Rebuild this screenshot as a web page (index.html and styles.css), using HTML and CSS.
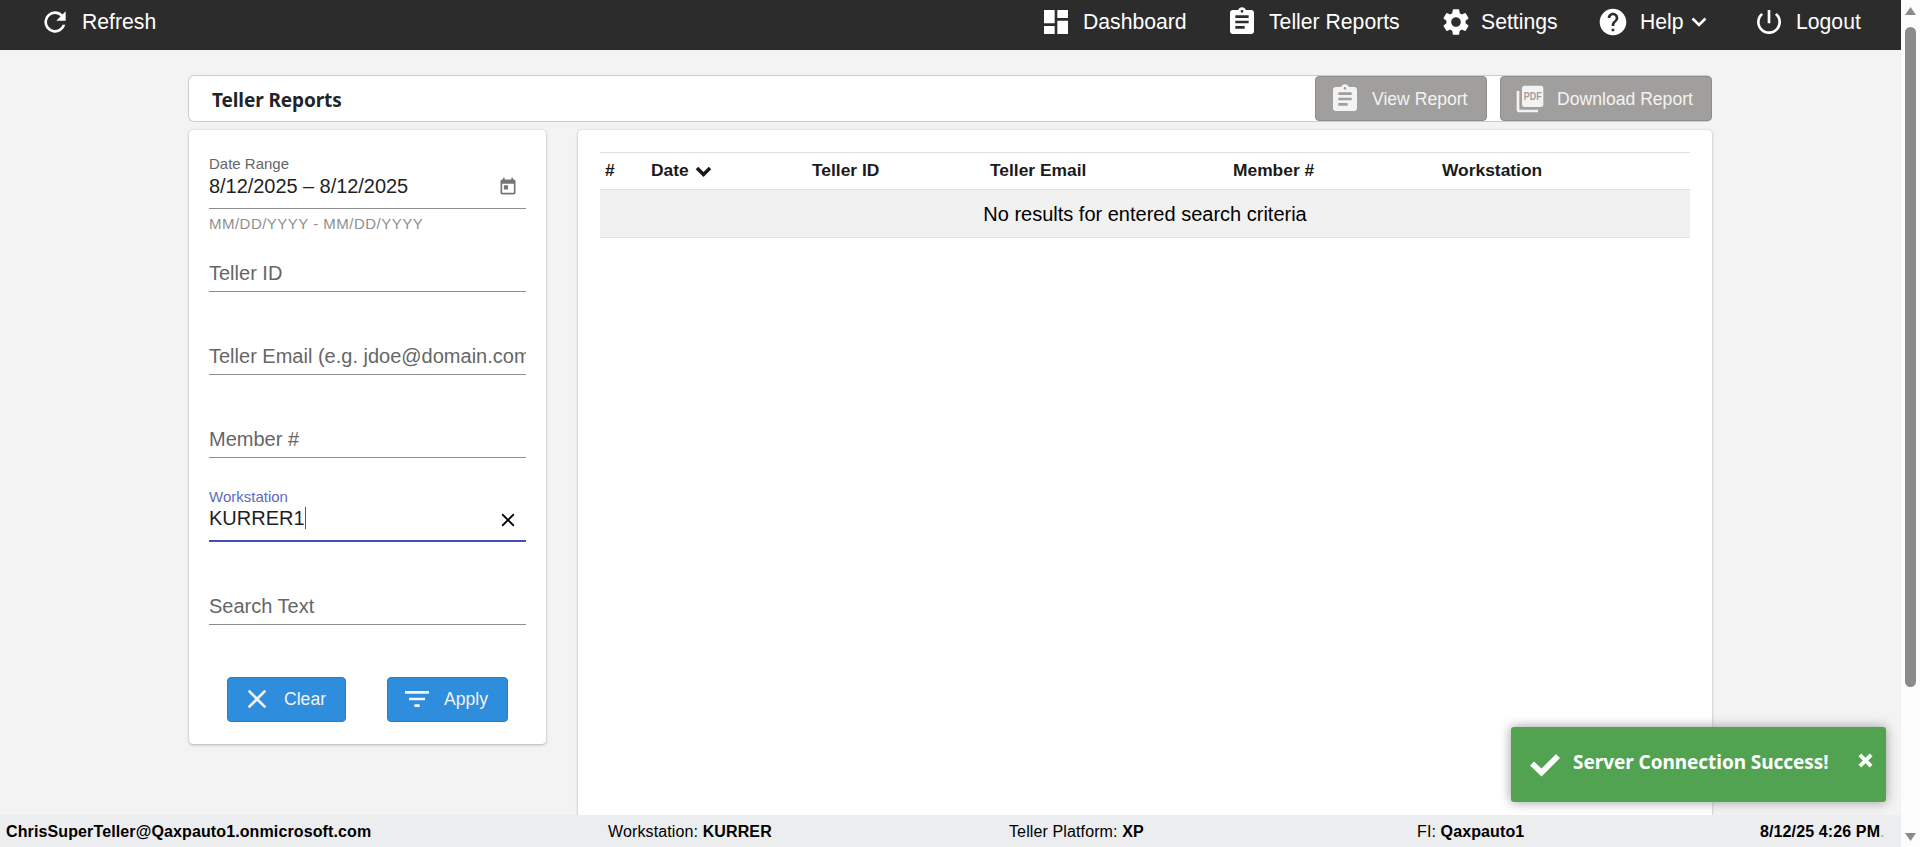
FILE: index.html
```
<!DOCTYPE html>
<html lang="en">
<head>
    <meta charset="utf-8">
    <title>Teller Reports</title>
    <link rel="stylesheet" href="styles.css">
</head>
<body>
    <svg width="0" height="0" class="defs">
        <symbol id="i-refresh" viewBox="0 0 24 24"><path d="M17.65 6.35A7.96 7.96 0 0 0 12 4a8 8 0 1 0 7.73 10h-2.08A6 6 0 1 1 12 6c1.66 0 3.14.69 4.22 1.78L13 11h7V4z"/></symbol>
        <symbol id="i-dashboard" viewBox="0 0 24 24"><path d="M3 13h8V3H3zm0 8h8v-6H3zm10 0h8V11h-8zm0-18v6h8V3z"/></symbol>
        <symbol id="i-report" viewBox="0 0 24 24"><path d="M19 3h-4.18C14.4 1.84 13.3 1 12 1s-2.4.84-2.82 2H5c-1.1 0-2 .9-2 2v14c0 1.1.9 2 2 2h14c1.1 0 2-.9 2-2V5c0-1.1-.9-2-2-2zm-7 0c.55 0 1 .45 1 1s-.45 1-1 1-1-.45-1-1 .45-1 1-1zm2 14H7v-2h7zm3-4H7v-2h10zm0-4H7V7h10z"/></symbol>
        <symbol id="i-settings" viewBox="0 0 24 24"><path d="M19.14 12.94c.04-.3.06-.61.06-.94 0-.32-.02-.64-.07-.94l2.03-1.58c.18-.14.23-.41.12-.61l-1.92-3.32c-.12-.22-.37-.29-.59-.22l-2.39.96c-.5-.38-1.03-.7-1.62-.94l-.36-2.54c-.04-.24-.24-.41-.48-.41h-3.84c-.24 0-.43.17-.47.41l-.36 2.54c-.59.24-1.13.57-1.62.94l-2.39-.96c-.22-.08-.47 0-.59.22L2.74 8.87c-.12.21-.08.47.12.61l2.03 1.58c-.05.3-.09.63-.09.94s.02.64.07.94l-2.03 1.58c-.18.14-.23.41-.12.61l1.92 3.32c.12.22.37.29.59.22l2.39-.96c.5.38 1.03.7 1.62.94l.36 2.54c.05.24.24.41.48.41h3.84c.24 0 .44-.17.47-.41l.36-2.54c.59-.24 1.13-.56 1.62-.94l2.39.96c.22.08.47 0 .59-.22l1.92-3.32c.12-.22.07-.47-.12-.61zM12 15.6c-1.98 0-3.6-1.62-3.6-3.6s1.62-3.6 3.6-3.6 3.6 1.62 3.6 3.6-1.62 3.6-3.6 3.6z"/></symbol>
        <symbol id="i-help" viewBox="0 0 24 24"><path d="M12 2C6.48 2 2 6.48 2 12s4.48 10 10 10 10-4.48 10-10S17.52 2 12 2zm1 17h-2v-2h2zm2.07-7.75-.9.92C13.45 12.9 13 13.5 13 15h-2v-.5c0-1.1.45-2.1 1.17-2.83l1.24-1.26c.37-.36.59-.86.59-1.41 0-1.1-.9-2-2-2s-2 .9-2 2H8c0-2.21 1.79-4 4-4s4 1.79 4 4c0 .88-.36 1.68-.93 2.25z"/></symbol>
        <symbol id="i-power" viewBox="0 0 24 24"><path d="M13 3h-2v10h2zm4.83 2.17-1.42 1.42A6.92 6.92 0 0 1 19 12a7 7 0 1 1-11.42-5.42L6.17 5.17A8.93 8.93 0 0 0 3 12a9 9 0 1 0 14.83-6.83z"/></symbol>
        <symbol id="i-close" viewBox="0 0 24 24"><path d="M19 6.41 17.59 5 12 10.59 6.41 5 5 6.41 10.59 12 5 17.59 6.41 19 12 13.41 17.59 19 19 17.59 13.41 12z"/></symbol>
        <symbol id="i-filter" viewBox="0 0 24 24"><path d="M10 18h4v-2h-4zM3 6v2h18V6zm3 7h12v-2H6z"/></symbol>
        <symbol id="i-today" viewBox="0 0 24 24"><path d="M19 3h-1V1h-2v2H8V1H6v2H5c-1.11 0-1.99.9-1.99 2L3 19c0 1.1.89 2 2 2h14c1.1 0 2-.9 2-2V5c0-1.1-.9-2-2-2zm0 16H5V8h14zM7 10h5v5H7z"/></symbol>
    </svg>

    <div class="app">
        <header class="topbar">
            <a class="item"><svg class="icon"><use href="#i-refresh"/></svg><span>Refresh</span></a>
            <nav>
                <a class="item"><svg class="icon"><use href="#i-dashboard"/></svg><span>Dashboard</span></a>
                <a class="item"><svg class="icon"><use href="#i-report"/></svg><span>Teller Reports</span></a>
                <a class="item settings"><svg class="icon"><use href="#i-settings"/></svg><span>Settings</span></a>
                <a class="item"><svg class="icon"><use href="#i-help"/></svg><span>Help</span><svg class="chevron" viewBox="0 0 16 10"><path d="M1.5 1.5 8 8l6.500-6.500"/></svg></a>
                <a class="item"><svg class="icon"><use href="#i-power"/></svg><span>Logout</span></a>
            </nav>
        </header>

        <main>
            <div class="titlebar">
                <h1>Teller Reports</h1>
                <button class="btn gray view"><svg class="icon"><use href="#i-report"/></svg><span>View Report</span></button>
                <button class="btn gray download">
                    <svg class="icon" viewBox="0 0 24 24">
                        <path d="M4 6H2v14c0 1.100.9 2 2 2h14v-2H4z"/>
                        <rect x="6" y="2" width="16" height="16" rx="2"/>
                        <text class="pdf" x="7.400" y="13" textLength="13.400" lengthAdjust="spacingAndGlyphs">PDF</text>
                    </svg><span>Download Report</span>
                </button>
            </div>

            <div class="columns">
                <form class="card filters">
                    <div class="field date">
                        <label>Date Range</label>
                        <div class="value"><span>8/12/2025 – 8/12/2025</span><svg class="today"><use href="#i-today"/></svg></div>
                    </div>
                    <div class="hint">MM/DD/YYYY - MM/DD/YYYY</div>
                    <div class="field id"><input type="text" placeholder="Teller ID"></div>
                    <div class="field"><input type="text" placeholder="Teller Email (e.g. jdoe@domain.com)"></div>
                    <div class="field"><input type="text" placeholder="Member #"></div>
                    <div class="field active">
                        <label>Workstation</label>
                        <div class="value"><span class="typed">KURRER1</span><svg class="clear"><use href="#i-close"/></svg></div>
                    </div>
                    <div class="field search"><input type="text" placeholder="Search Text"></div>
                    <div class="buttons">
                        <button class="btn blue" type="button"><svg class="icon"><use href="#i-close"/></svg><span>Clear</span></button>
                        <button class="btn blue apply" type="button"><svg class="icon"><use href="#i-filter"/></svg><span>Apply</span></button>
                    </div>
                </form>

                <section class="card results">
                    <table>
                        <colgroup><col class="c1"><col class="c2"><col class="c3"><col class="c4"><col class="c5"><col></colgroup>
                        <thead>
                            <tr>
                                <th>#</th>
                                <th>Date <svg class="sort" viewBox="0 0 17 11"><path d="M2 2l6.500 6.500L15 2"/></svg></th>
                                <th>Teller ID</th>
                                <th>Teller Email</th>
                                <th>Member #</th>
                                <th>Workstation</th>
                            </tr>
                        </thead>
                        <tbody>
                            <tr><td colspan="6">No results for entered search criteria</td></tr>
                        </tbody>
                    </table>
                </section>
            </div>
        </main>

        <footer>
            <b class="user">ChrisSuperTeller@Qaxpauto1.onmicrosoft.com</b>
            <span>Workstation: <b>KURRER</b></span>
            <span>Teller Platform: <b>XP</b></span>
            <span>FI: <b>Qaxpauto1</b></span>
            <span class="clock"><b>8/12/25 4:26 PM</b>.</span>
        </footer>
    </div>

    <div class="scrollbar">
        <svg viewBox="0 0 13 10"><path d="M6.500 1 12 9H1z"/></svg>
        <div class="thumb"></div>
        <svg class="down" viewBox="0 0 13 10"><path d="M6.500 9 12 1H1z"/></svg>
    </div>

    <div class="toast">
        <svg class="check" viewBox="0 0 30 23"><path d="M0 11.500 4 7.500 11.500 14.500 26 0 30 4 11.500 22.500z"/></svg>
        <span>Server Connection Success!</span>
        <svg class="dismiss" viewBox="0 0 12 12"><path d="M1.500 1.500l9 9M10.500 1.500l-9 9"/></svg>
    </div>
</body>
</html>
```
FILE: styles.css
```
* {
    box-sizing: border-box;
}
body {
    margin: 0;
    height: 847px;
    display: flex;
    overflow: hidden;
    background: #f3f3f3;
    color: #000;
    font-family: "Liberation Sans", Arial, sans-serif;
    font-size: 16px;
}
.defs {
    position: absolute;
}
svg {
    fill: currentColor;
    flex: none;
}
.app {
    width: 1901px;
    height: 847px;
    display: flex;
    flex-direction: column;
}

/* top bar */
.topbar {
    height: 50px;
    flex: none;
    display: flex;
    justify-content: space-between;
    padding: 0 0 6px 39px;
    background: #2c2c2c;
    color: #fff;
    font-size: 21.200px;
}
.topbar nav {
    display: grid;
    grid-template-columns: 186px 214px 157px 156px 148px;
}
.item {
    display: flex;
    align-items: center;
    gap: 11px;
    white-space: nowrap;
}
.settings {
    gap: 9px;
}
.icon {
    width: 32px;
    height: 32px;
}
.chevron {
    width: 16px;
    height: 10px;
    margin-left: -4px;
    fill: none;
    stroke: #fff;
    stroke-width: 2.6;
}

main {
    flex: 1;
    min-height: 0;
    width: 1524px;
    margin-left: 188px;
    padding-top: 25px;
    display: flex;
    flex-direction: column;
}
.titlebar {
    height: 47px;
    flex: none;
    display: flex;
    align-items: center;
    border: 1px solid #ccc;
    border-right: none;
    border-radius: 6px;
    background: #fff;
}
h1 {
    flex: 1;
    margin: 0;
    padding: 3px 0 0 23px;
    color: #212529;
    font: bold 19px "Noto Sans", sans-serif;
    letter-spacing: -0.1px;
}
.btn {
    height: 45px;
    display: flex;
    align-items: center;
    border-radius: 4px;
    padding: 0 0 0 13px;
    gap: 11px;
    font: 17.6px "Liberation Sans", Arial, sans-serif;
    white-space: nowrap;
}
.gray {
    padding-top: 1px;
    background: #a19f9d;
    border: 1px solid #8f8d8c;
    color: #f3f3f3;
}
.view {
    width: 172px;
    margin-right: 13px;
}
.download {
    width: 212px;
}
.pdf {
    fill: #a19f9d;
    font: bold 8px "Liberation Sans", Arial, sans-serif;
}

.columns {
    flex: 1;
    min-height: 0;
    display: flex;
    align-items: flex-start;
    justify-content: space-between;
    padding: 8px 0 0 1px;
}
.card {
    background: #fff;
    border-radius: 4px;
    box-shadow: 0 1px 3px rgba(0,0,0,.25), 0 0 1px rgba(0,0,0,.2);
}

/* filters */
.filters {
    width: 357px;
    height: 614px;
    padding: 0 20px;
}
.field {
    height: 83px;
    display: flex;
    flex-direction: column;
    justify-content: flex-end;
    border-bottom: 1px solid #8f8f8f;
}
.field input {
    width: 100%;
    height: 36px;
    border: none;
    outline: none;
    padding: 0;
    background: none;
    font: 20px "Liberation Sans", Arial, sans-serif;
}
.field input::placeholder {
    color: #666;
}
.field label {
    color: #666;
    font-size: 15px;
    line-height: 18px;
}
.date {
    height: 79px;
}
.value {
    height: 35px;
    display: flex;
    justify-content: space-between;
    color: #1f1f1f;
    font-size: 20px;
    line-height: 26px;
}
.date .value {
    letter-spacing: -0.05px;
}
.today {
    width: 20px;
    height: 20px;
    margin: 4px 8px 0 0;
    color: #757575;
}
.hint {
    height: 29px;
    padding-top: 6px;
    color: #8f8f8f;
    font-size: 15px;
    letter-spacing: 0.480px;
    line-height: 17px;
    white-space: nowrap;
}
.id {
    height: 54px;
}
.active {
    height: 84px;
    border-bottom: 2px solid #3f51b5;
}
.active label {
    color: #5c6bc0;
}
.active .value {
    height: 34px;
}
.typed {
    height: 22px;
    line-height: 22px;
    margin-top: 1px;
    border-right: 1px solid #3f51b5;
}
.clear {
    width: 22px;
    height: 22px;
    margin: 3px 7px 0 0;
    color: #000;
}
.buttons {
    display: flex;
    gap: 41px;
    padding: 52px 0 0 18px;
}
.blue {
    width: 119px;
    padding-bottom: 1px;
    background: #2f8ddd;
    border: 1px solid #2a7dc4;
    color: #f3f3f3;
}
.apply {
    width: 121px;
}

/* results */
.results {
    width: 1134px;
    height: 740px;
    padding: 22px 22px 0;
}
table {
    width: 1090px;
    table-layout: fixed;
    border-collapse: collapse;
}
.c1 { width: 46px; }
.c2 { width: 161px; }
.c3 { width: 178px; }
.c4 { width: 243px; }
.c5 { width: 209px; }
th {
    height: 37px;
    padding: 0 0 1px 5px;
    border-top: 1px solid #dee2e6;
    text-align: left;
    color: #1a1a1a;
    font-size: 17.400px;
}
.sort {
    width: 17px;
    height: 11px;
    margin-left: 1px;
    vertical-align: -1px;
    fill: none;
    stroke: #1a1a1a;
    stroke-width: 3.500;
}
td {
    height: 48px;
    padding: 1px 0 0;
    background: #f1f1f1;
    border-top: 1px solid #dee2e6;
    border-bottom: 1px solid #dee2e6;
    text-align: center;
    font-size: 20px;
}

footer {
    position: relative;
    height: 32px;
    flex: none;
    display: grid;
    grid-template-columns: 602px 401px 408px 343px auto;
    align-items: center;
    padding: 1px 0 0 6px;
    background: #ebedef;
    font-size: 16px;
    letter-spacing: 0.120px;
    white-space: nowrap;
}
.clock {
    color: #999;
}
.clock b {
    color: #000;
}

.scrollbar {
    width: 19px;
    height: 847px;
    display: flex;
    flex-direction: column;
    align-items: center;
    padding: 6px 0 5px;
    background: #fcfcfc;
    color: #8b8b8b;
}
.scrollbar svg {
    width: 13px;
    height: 10px;
}
.thumb {
    width: 11px;
    height: 660px;
    margin-top: 11px;
    border-radius: 6px;
    background: #8b8b8b;
}
.down {
    margin-top: auto;
}

.toast {
    position: absolute;
    left: 1511px;
    top: 727px;
    width: 375px;
    height: 75px;
    display: flex;
    align-items: center;
    padding: 0 13px 6px 19px;
    border-radius: 3px;
    background: #51a351;
    box-shadow: 0 0 12px #999;
    color: #fff;
    font: bold 19px "Noto Sans", sans-serif;
    letter-spacing: -0.060px;
    white-space: nowrap;
}
.check {
    width: 30px;
    height: 23px;
    margin: 7px 13px 0 0;
}
.dismiss {
    width: 15px;
    height: 15px;
    margin: 0 0 2px auto;
    fill: none;
    stroke: #fff;
    stroke-width: 3.100;
}
```
